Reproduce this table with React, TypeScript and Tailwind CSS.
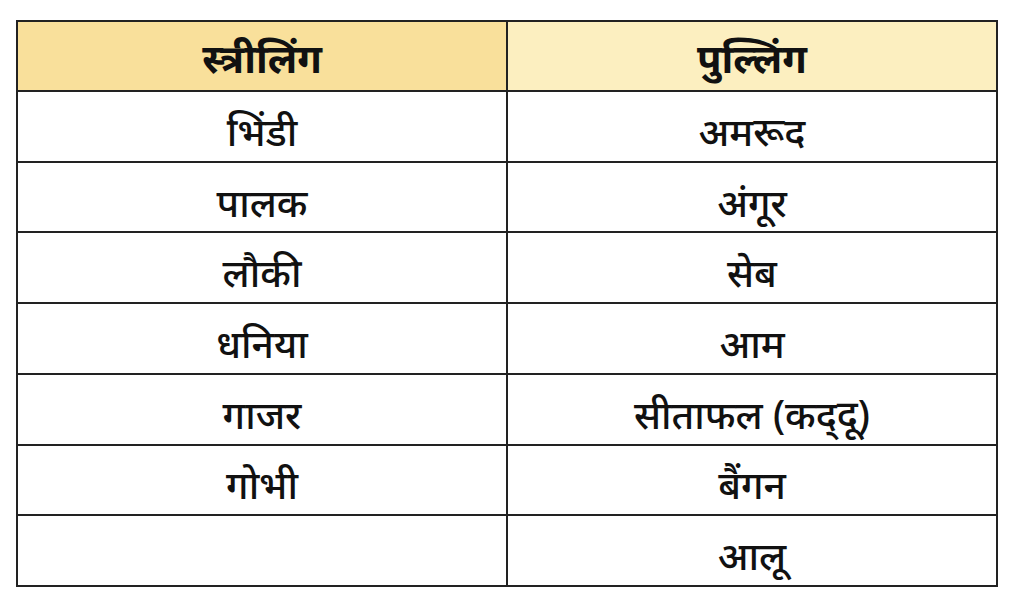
const rows: [string, string][] = [
  ['भिंडी', 'अमरूद'],
  ['पालक', 'अंगूर'],
  ['लौकी', 'सेब'],
  ['धनिया', 'आम'],
  ['गाजर', 'सीताफल (कद्\u200Cदू)'],
  ['गोभी', 'बैंगन'],
  ['', 'आलू'],
];

export default function App() {
  return (
    <div className="h-[604px] w-[1024px] bg-white pl-4 pt-5 font-['Noto_Sans',sans-serif] text-[#111]">
      <table className="h-[567px] w-[982px] table-fixed border-collapse border-2 border-[#222]">
        <thead>
          <tr className="h-[70px] text-[40px] font-bold leading-none">
            <th className="border-2 border-[#222] bg-[#f9e09b] pt-1">स्त्रीलिंग</th>
            <th className="border-2 border-[#222] bg-[#fcefc0] pt-1">पुल्लिंग</th>
          </tr>
        </thead>
        <tbody>
          {rows.map(([f, m], i) => (
            <tr key={i} className="h-[70px] text-[39px] font-medium leading-none">
              <td className="border-2 border-[#222] pt-2 text-center">{f}</td>
              <td className="border-2 border-[#222] pt-2 text-center">{m}</td>
            </tr>
          ))}
        </tbody>
      </table>
    </div>
  );
}
